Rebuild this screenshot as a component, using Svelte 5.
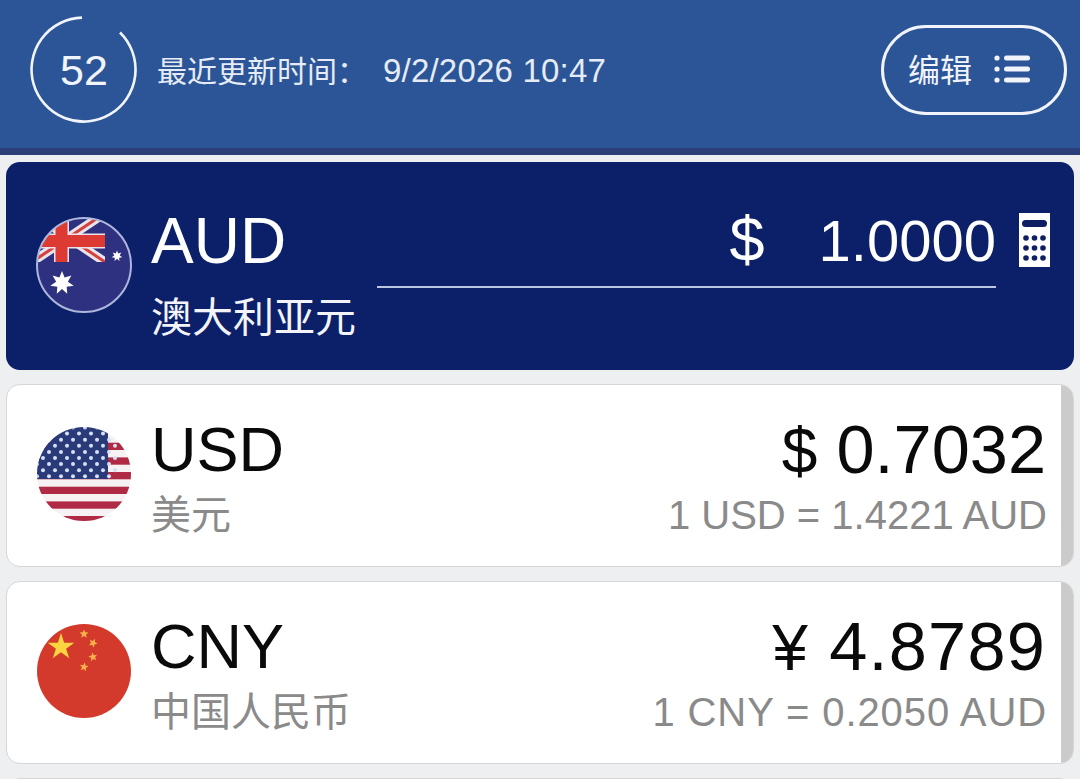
<script>
  const star = (cx, cy, r, n = 5, inner = 0.382, rot = -90) => {
    const pts = []
    for (let i = 0; i < n * 2; i++) {
      const rad = i % 2 ? r * inner : r
      const a = ((rot + (i * 180) / n) * Math.PI) / 180
      pts.push(`${(cx + rad * Math.cos(a)).toFixed(2)},${(cy + rad * Math.sin(a)).toFixed(2)}`)
    }
    return pts.join(' ')
  }

  const usStripes = [16.7, 31.4, 46, 60.7, 75.4, 90]
  const usDots = []
  for (let row = 0; row < 9; row++) {
    for (let col = 0; col < 7; col++) {
      usDots.push({ x: 1 + col * 12 + (row % 2 ? 6 : 0), y: 1.5 + row * 6.1 })
    }
  }

  const cnSmall = [
    [48, 11, 0],
    [57, 20, 25],
    [57, 34, -10],
    [48, 44, 10]
  ]
</script>

<div class="screen">
  <header class="topbar">
    <div class="timer">
      <svg class="ring" viewBox="0 0 110 110" width="110" height="110">
        <path d="M53 2.6A52 52 0 1 0 91 17.5" />
      </svg>
      <span>52</span>
    </div>
    <span class="updated-label">最近更新时间：</span>
    <span class="updated-time">9/2/2026 10:47</span>
    <button class="edit-btn">
      <span class="edit-label">编辑</span>
      <svg viewBox="0 0 36 28" width="36" height="28">
        <circle cx="3" cy="3" r="2.6" />
        <circle cx="3" cy="14" r="2.6" />
        <circle cx="3" cy="25" r="2.6" />
        <rect x="10" y="0.5" width="26" height="5" rx="2.5" />
        <rect x="10" y="11.5" width="26" height="5" rx="2.5" />
        <rect x="10" y="22.5" width="26" height="5" rx="2.5" />
      </svg>
    </button>
  </header>

  <div class="list">
    <section class="card base">
      <svg class="flag" viewBox="0 0 96 96" width="96" height="96">
        <defs>
          <clipPath id="clip-au"><circle cx="48" cy="48" r="47" /></clipPath>
        </defs>
        <g clip-path="url(#clip-au)">
          <rect width="96" height="96" fill="#2e3180" />
          <path d="M-4 -4L69 45M69 -4L-4 45" stroke="#e9e4ea" stroke-width="9" />
          <path d="M-4 -4L69 45M69 -4L-4 45" stroke="#d5403f" stroke-width="3" />
          <path d="M25.5 -2V45M-2 24H69" stroke="#e9e4ea" stroke-width="15" />
          <path d="M25.5 -2V45M-2 24H69" stroke="#dc3a32" stroke-width="12" />
          <rect x="69" y="0" width="27" height="46" fill="#2e3180" />
          <rect y="45" width="96" height="51" fill="#2e3180" />
          <polygon points={star(26, 66, 12, 7, 0.5)} fill="#fff" />
          <polygon points={star(81, 39, 5.5, 7, 0.5)} fill="#fff" />
        </g>
        <circle cx="48" cy="48" r="47" fill="none" stroke="#aeb6dc" stroke-width="2" />
      </svg>
      <div class="names">
        <div class="code">AUD</div>
        <div class="name-base">澳大利亚元</div>
      </div>
      <div class="amount-field">
        <div class="amount-row">
          <span class="symbol">$</span>
          <span class="value">1.0000</span>
        </div>
      </div>
      <svg class="calc" viewBox="0 0 31 54" width="31" height="54">
        <rect width="31" height="54" fill="#fff" />
        <rect x="3" y="7" width="25" height="7" rx="3.5" fill="#0d1e63" />
        {#each [25, 35, 45] as y (y)}
          {#each [7, 15.5, 24] as x (x)}
            <circle cx={x} cy={y} r="2.8" fill="#0d1e63" />
          {/each}
        {/each}
      </svg>
    </section>

    <section class="card row">
      <svg class="flag" viewBox="0 0 96 96" width="96" height="96">
        <defs>
          <clipPath id="clip-us"><circle cx="48" cy="48" r="47" /></clipPath>
        </defs>
        <g clip-path="url(#clip-us)">
          <rect width="96" height="96" fill="#f6f1f2" />
          {#each usStripes as y (y)}
            <rect {y} width="96" height="7.3" fill="#b02a45" />
          {/each}
          <rect width="72" height="53" fill="#2a3a78" />
          {#each usDots as d, i (i)}
            <circle cx={d.x} cy={d.y} r="2" fill="#d5e0f5" />
          {/each}
        </g>
      </svg>
      <div class="names">
        <div class="code">USD</div>
        <div class="name">美元</div>
      </div>
      <div class="quote">
        <div class="price"><span class="cur">$</span> 0.7032</div>
        <div class="rate">1 USD = 1.4221 AUD</div>
      </div>
      <div class="strip"></div>
    </section>

    <section class="card row">
      <svg class="flag" viewBox="0 0 96 96" width="96" height="96">
        <circle cx="48" cy="48" r="47" fill="#d33a2c" />
        <polygon points={star(25, 24, 14)} fill="#fbd53f" />
        {#each cnSmall as s (s[0] + '-' + s[1])}
          <polygon points={star(s[0], s[1], 4.6, 5, 0.45, -90 + s[2])} fill="#f8b04a" />
        {/each}
      </svg>
      <div class="names">
        <div class="code">CNY</div>
        <div class="name">中国人民币</div>
      </div>
      <div class="quote">
        <div class="price wide"><span class="cur">¥</span> 4.8789</div>
        <div class="rate wide-rate">1 CNY = 0.2050 AUD</div>
      </div>
      <div class="strip"></div>
    </section>

    <section class="card row"></section>
  </div>
</div>

<style>
  :global(body) {
    margin: 0;
    background: #eeeff1;
  }

  .screen {
    height: 100vh;
    overflow: hidden;
    font-family: 'Liberation Sans', 'Noto Sans CJK SC', sans-serif;
  }

  .topbar {
    box-sizing: border-box;
    height: 155px;
    padding: 0 13px 8px 29px;
    display: flex;
    align-items: center;
    background: #2b5597;
    border-bottom: 7px solid #2c3f78;
    color: #f1f4fa;
  }

  .timer {
    position: relative;
    width: 110px;
    height: 110px;
    display: flex;
    align-items: center;
    justify-content: center;
    margin-right: 18px;
    font-size: 43px;
  }

  .ring {
    position: absolute;
    inset: 0;
  }

  .ring path {
    fill: none;
    stroke: #f1f4fa;
    stroke-width: 2.6;
  }

  .updated-label {
    font-size: 30px;
    width: 226px;
    margin-bottom: 3px;
    color: #e6ebf5;
  }

  .updated-time {
    font-size: 33px;
    letter-spacing: 0.2px;
    margin-top: 1px;
    color: #e6ebf5;
  }

  .edit-btn {
    margin-left: auto;
    box-sizing: border-box;
    width: 186px;
    height: 90px;
    border: 3px solid #f1f4fa;
    border-radius: 45px;
    background: none;
    color: inherit;
    font-family: inherit;
    font-size: 32px;
    padding: 0 0 0 24px;
    display: flex;
    align-items: center;
    gap: 22px;
  }

  .edit-label {
    margin-bottom: 4px;
  }

  .edit-btn svg {
    fill: #f1f4fa;
    margin-bottom: 2px;
  }

  .list {
    padding: 7px 6px 0;
    display: flex;
    flex-direction: column;
    gap: 14px;
  }

  .card {
    box-sizing: border-box;
    display: flex;
    align-items: center;
    border-radius: 14px;
    overflow: hidden;
    flex: none;
  }

  .base {
    height: 208px;
    background: #0b2069;
    color: #fff;
    padding-left: 30px;
    padding-right: 24px;
  }

  .row {
    height: 183px;
    background: #fff;
    border: 1px solid #d6d6d6;
    padding-left: 29px;
    color: #0a0a0a;
  }

  .flag {
    flex: none;
    margin-right: 19px;
    filter: blur(0.5px);
  }

  .base .flag {
    margin-top: -2px;
  }

  .row .flag {
    margin-top: -4px;
  }

  .code {
    font-size: 63px;
    line-height: 72px;
  }

  .base .names {
    margin-top: 20px;
  }

  .base .code {
    font-size: 64px;
  }

  .name-base {
    font-size: 41px;
    line-height: 58px;
    margin-top: 12px;
    color: #f2f4fa;
  }

  .name {
    font-size: 40px;
    line-height: 46px;
    margin-top: 7px;
    color: #8a8a8a;
  }

  .amount-field {
    flex: 1;
    margin-left: 21px;
    margin-bottom: 38px;
    border-bottom: 2px solid #bcc6e2;
    padding-bottom: 12px;
  }

  .amount-row {
    display: flex;
    justify-content: flex-end;
    align-items: baseline;
    gap: 54px;
    font-size: 58px;
    line-height: 66px;
  }

  .symbol {
    font-size: 63px;
  }

  .calc {
    margin-left: 23px;
    margin-bottom: 52px;
    flex: none;
  }

  .quote {
    margin-left: auto;
    margin-right: 15px;
    text-align: right;
  }

  .price {
    font-size: 68.5px;
    line-height: 72px;
  }

  .wide {
    letter-spacing: 1.2px;
  }

  .cur {
    font-size: 64px;
  }

  .rate {
    font-size: 40px;
    line-height: 46px;
    margin-top: 5px;
    margin-right: -1px;
    color: #8a8a8a;
  }

  .wide-rate {
    letter-spacing: 0.9px;
  }

  .strip {
    align-self: stretch;
    width: 12px;
    background: #cbcbcb;
    flex: none;
  }
</style>
